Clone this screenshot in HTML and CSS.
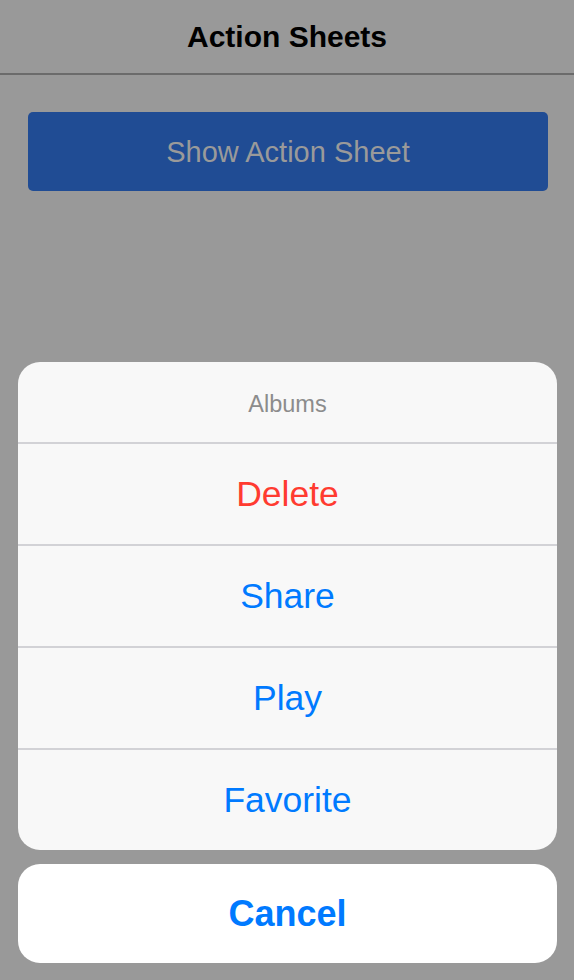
FILE: index.html
```html
<!DOCTYPE html>
<html>
<head>
<meta charset="utf-8">
<link rel="stylesheet" href="styles.css">
</head>
<body>
<header class="navbar"><h1 class="nav-title">Action Sheets</h1></header>
<main class="content">
  <button class="show-btn">Show Action Sheet</button>
</main>
<div class="sheet-wrap">
  <div class="sheet-group">
    <div class="sheet-title">Albums</div>
    <div class="sheet-item destructive">Delete</div>
    <div class="sheet-item">Share</div>
    <div class="sheet-item">Play</div>
    <div class="sheet-item last">Favorite</div>
  </div>
  <div class="sheet-cancel">Cancel</div>
</div>
</body>
</html>
```
FILE: styles.css
```css
html, body {
  margin: 0;
  padding: 0;
}
body {
  background: #999999;
  font-family: "Liberation Sans", Arial, sans-serif;
  width: 574px;
  height: 980px;
  overflow: hidden;
  position: relative;
}
.navbar {
  height: 73px;
  border-bottom: 2px solid #6b6b6b;
  display: flex;
  align-items: center;
  justify-content: center;
}
.nav-title {
  margin: 0;
  font-size: 30px;
  font-weight: bold;
  color: #000;
}
.content {
  padding: 37px 26px 0 28px;
}
.show-btn {
  display: flex;
  align-items: center;
  justify-content: center;
  width: 520px;
  height: 79px;
  border: none;
  border-radius: 5px;
  background: #204c94;
  color: #9a9a9a;
  font-family: "Liberation Sans", Arial, sans-serif;
  font-size: 29px;
  padding: 2px 0 0;
}
.sheet-wrap {
  position: absolute;
  left: 18px;
  right: 17px;
  bottom: 17px;
  display: flex;
  flex-direction: column;
  gap: 14px;
}
.sheet-group {
  background: #f8f8f8;
  border-radius: 22px;
  overflow: hidden;
}
.sheet-title {
  height: 82px;
  border-bottom: 2px solid #d2d2d6;
  display: flex;
  align-items: center;
  justify-content: center;
  font-size: 23.5px;
  color: #8c8c8c;
  box-sizing: border-box;
  padding-top: 5px;
}
.sheet-item {
  height: 102px;
  border-bottom: 2px solid #d2d2d6;
  box-sizing: border-box;
  display: flex;
  align-items: center;
  justify-content: center;
  font-size: 35.5px;
  color: #007aff;
}
.sheet-item.last {
  border-bottom: none;
  height: 100px;
}
.sheet-item.destructive {
  color: #ff3b30;
}
.sheet-cancel {
  height: 99px;
  background: #ffffff;
  border-radius: 22px;
  display: flex;
  align-items: center;
  justify-content: center;
  font-size: 36px;
  font-weight: bold;
  color: #007aff;
}
```
